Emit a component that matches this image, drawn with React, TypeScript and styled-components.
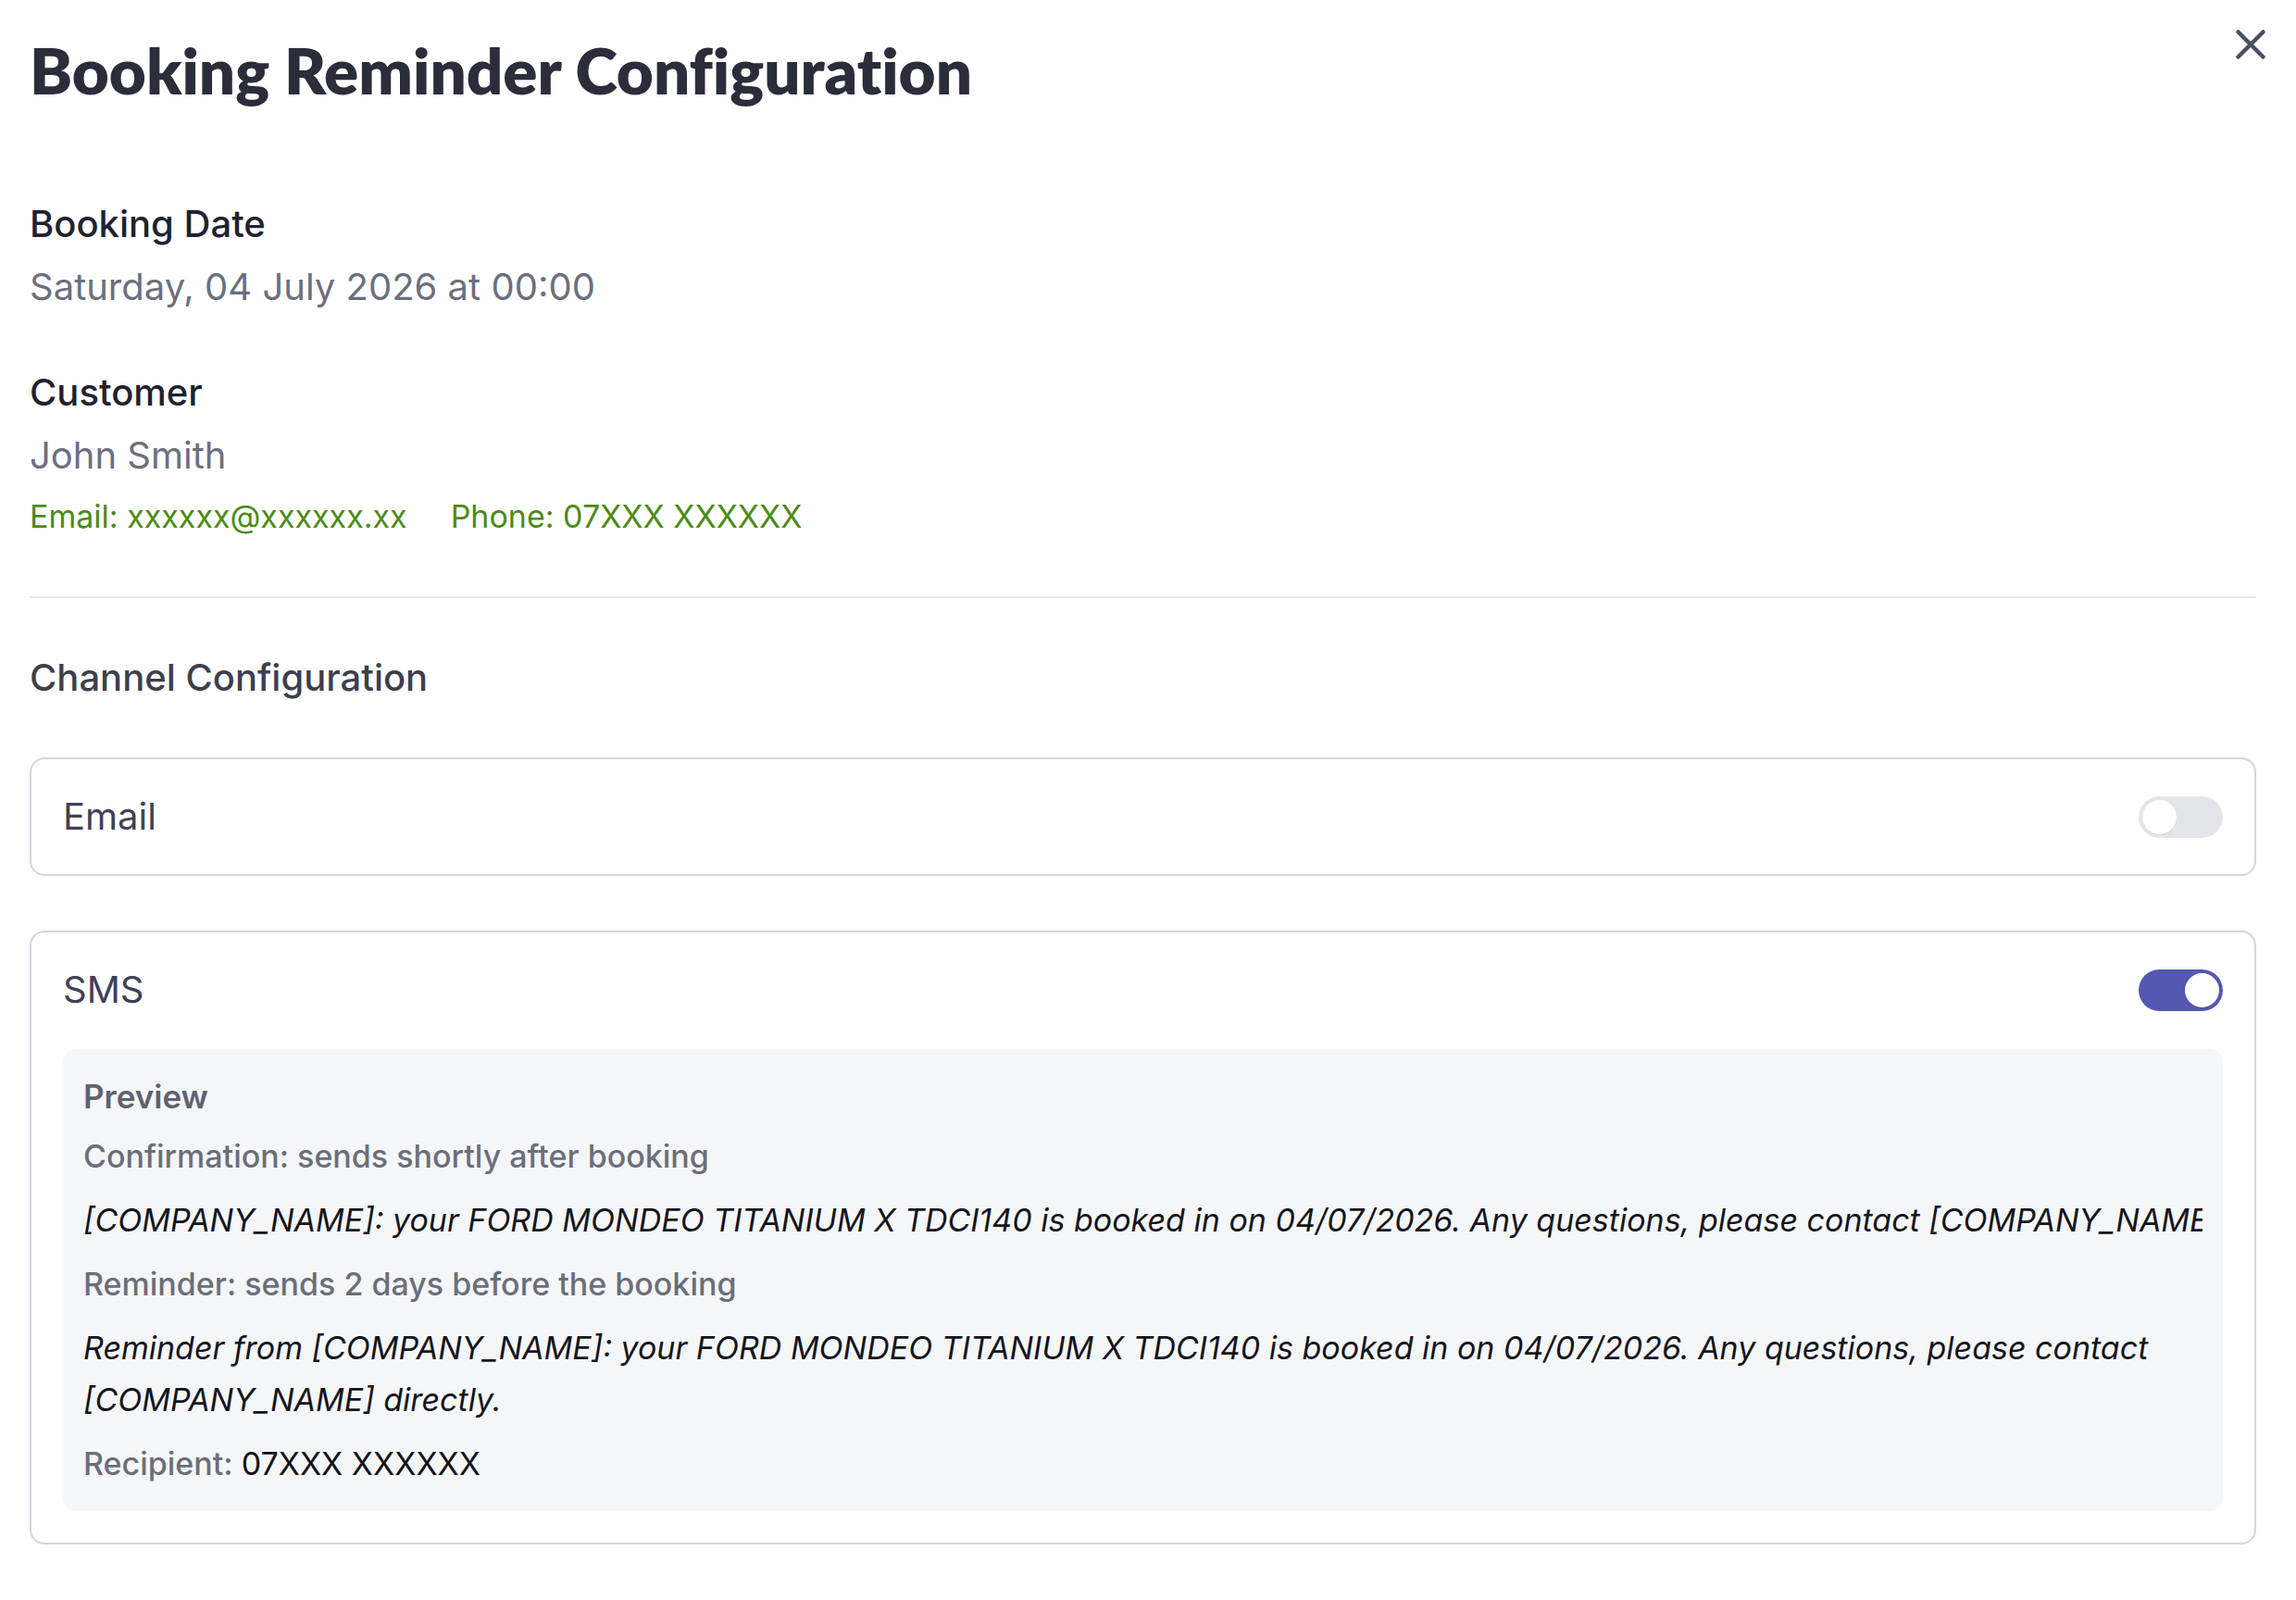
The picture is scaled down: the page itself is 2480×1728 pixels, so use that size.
import React from 'react';
import styled, { createGlobalStyle } from 'styled-components';
import { X } from 'lucide-react';

const GlobalStyle = createGlobalStyle`
  body {
    margin: 0;
    background: #ffffff;
    font-family: 'Inter', 'Liberation Sans', sans-serif;
  }
`;

const Page = styled.main`
  position: relative;
  padding: 36px 43px 48px 32px;
`;

const Title = styled.h1`
  margin: 0;
  font-family: 'Lato', 'Inter', sans-serif;
  font-weight: 800;
  font-size: 69px;
  line-height: 80px;
  color: #2b2d3a;
  font-variant-ligatures: none;
`;

const CloseButton = styled.button`
  position: absolute;
  top: 21px;
  right: 22px;
  width: 54px;
  height: 54px;
  padding: 0;
  border: none;
  background: transparent;
  color: #4a4f5e;
  display: flex;
  align-items: center;
  justify-content: center;
`;

const Field = styled.section<{ $top: number }>`
  margin-top: ${props => props.$top}px;
  display: flex;
  flex-direction: column;
  gap: 18px;
`;

const Label = styled.div`
  font-size: 40px;
  line-height: 48px;
  font-weight: 500;
  color: #1f2230;
`;

const Value = styled.div`
  font-size: 40px;
  line-height: 52px;
  color: #6b6f80;
`;

const ContactRow = styled.div`
  display: flex;
  gap: 47px;
  font-size: 34px;
  line-height: 44px;
  color: #4d8b17;
`;

const Divider = styled.hr`
  margin: 64px 0 0;
  border: none;
  border-top: 2px solid #e5e7eb;
`;

const SectionTitle = styled.h2`
  margin: 58px 0 0;
  font-size: 40px;
  line-height: 56px;
  font-weight: 500;
  color: #3d3f4d;
`;

const Channels = styled.div`
  margin-top: 58px;
  display: flex;
  flex-direction: column;
  gap: 59px;
`;

const ChannelCard = styled.div`
  border: 2px solid #d4d6dd;
  border-radius: 16px;
  padding: 34px;
  display: flex;
  flex-direction: column;
  gap: 36px;
`;

const ChannelHeader = styled.div`
  display: flex;
  align-items: center;
  justify-content: space-between;
  height: 56px;
`;

const ChannelName = styled.span`
  font-size: 40px;
  line-height: 56px;
  color: #3e4157;
`;

const Toggle = styled.button<{ $on: boolean }>`
  position: relative;
  width: 91px;
  height: 45px;
  padding: 0;
  border: none;
  border-radius: 999px;
  background: ${props => (props.$on ? '#5558b0' : '#e4e5ec')};
  &::after {
    content: '';
    position: absolute;
    top: 4px;
    left: ${props => (props.$on ? '50px' : '4px')};
    width: 37px;
    height: 37px;
    border-radius: 50%;
    background: #ffffff;
    box-shadow: 0 1px 2px rgba(0, 0, 0, 0.08);
  }
`;

const Preview = styled.div`
  background: #f5f6f8;
  border-radius: 14px;
  padding: 27px 22px;
  display: flex;
  flex-direction: column;
  gap: 17px;
`;

const PreviewTitle = styled.div`
  font-size: 35px;
  line-height: 48px;
  font-weight: 600;
  color: #5f6270;
`;

const Hint = styled.div`
  font-size: 34px;
  line-height: 48px;
  font-weight: 500;
  color: #6b6e7a;
`;

const Message = styled.div<{ $wrap?: boolean }>`
  font-size: 34px;
  line-height: 56px;
  font-style: italic;
  color: #14151c;
  white-space: ${props => (props.$wrap ? 'normal' : 'nowrap')};
  overflow: hidden;
`;

const Recipient = styled.div`
  font-size: 34px;
  line-height: 48px;
  font-weight: 500;
  color: #6b6e7a;
  span {
    font-weight: 400;
    color: #111218;
  }
`;

const App: React.FC = () => {
  return (
    <Page>
      <GlobalStyle />
      <Title>Booking Reminder Configuration</Title>
      <CloseButton aria-label="Close">
        <X size={54} strokeWidth={2} />
      </CloseButton>

      <Field $top={102}>
        <Label>Booking Date</Label>
        <Value>Saturday, 04 July 2026 at 00:00</Value>
      </Field>

      <Field $top={64}>
        <Label>Customer</Label>
        <Value>John Smith</Value>
        <ContactRow>
          <span>Email: xxxxxx@xxxxxx.xx</span>
          <span>Phone: 07XXX XXXXXX</span>
        </ContactRow>
      </Field>

      <Divider />
      <SectionTitle>Channel Configuration</SectionTitle>

      <Channels>
        <ChannelCard>
          <ChannelHeader>
            <ChannelName>Email</ChannelName>
            <Toggle $on={false} aria-label="Email" />
          </ChannelHeader>
        </ChannelCard>

        <ChannelCard>
          <ChannelHeader>
            <ChannelName>SMS</ChannelName>
            <Toggle $on aria-label="SMS" />
          </ChannelHeader>
          <Preview>
            <PreviewTitle>Preview</PreviewTitle>
            <Hint>Confirmation: sends shortly after booking</Hint>
            <Message>
              [COMPANY_NAME]: your FORD MONDEO TITANIUM X TDCI140 is booked in on 04/07/2026. Any questions, please contact [COMPANY_NAME] directly.
            </Message>
            <Hint>Reminder: sends 2 days before the booking</Hint>
            <Message $wrap>
              Reminder from [COMPANY_NAME]: your FORD MONDEO TITANIUM X TDCI140 is booked in on 04/07/2026. Any questions, please contact [COMPANY_NAME] directly.
            </Message>
            <Recipient>
              Recipient: <span>07XXX XXXXXX</span>
            </Recipient>
          </Preview>
        </ChannelCard>
      </Channels>
    </Page>
  );
};

export default App;
